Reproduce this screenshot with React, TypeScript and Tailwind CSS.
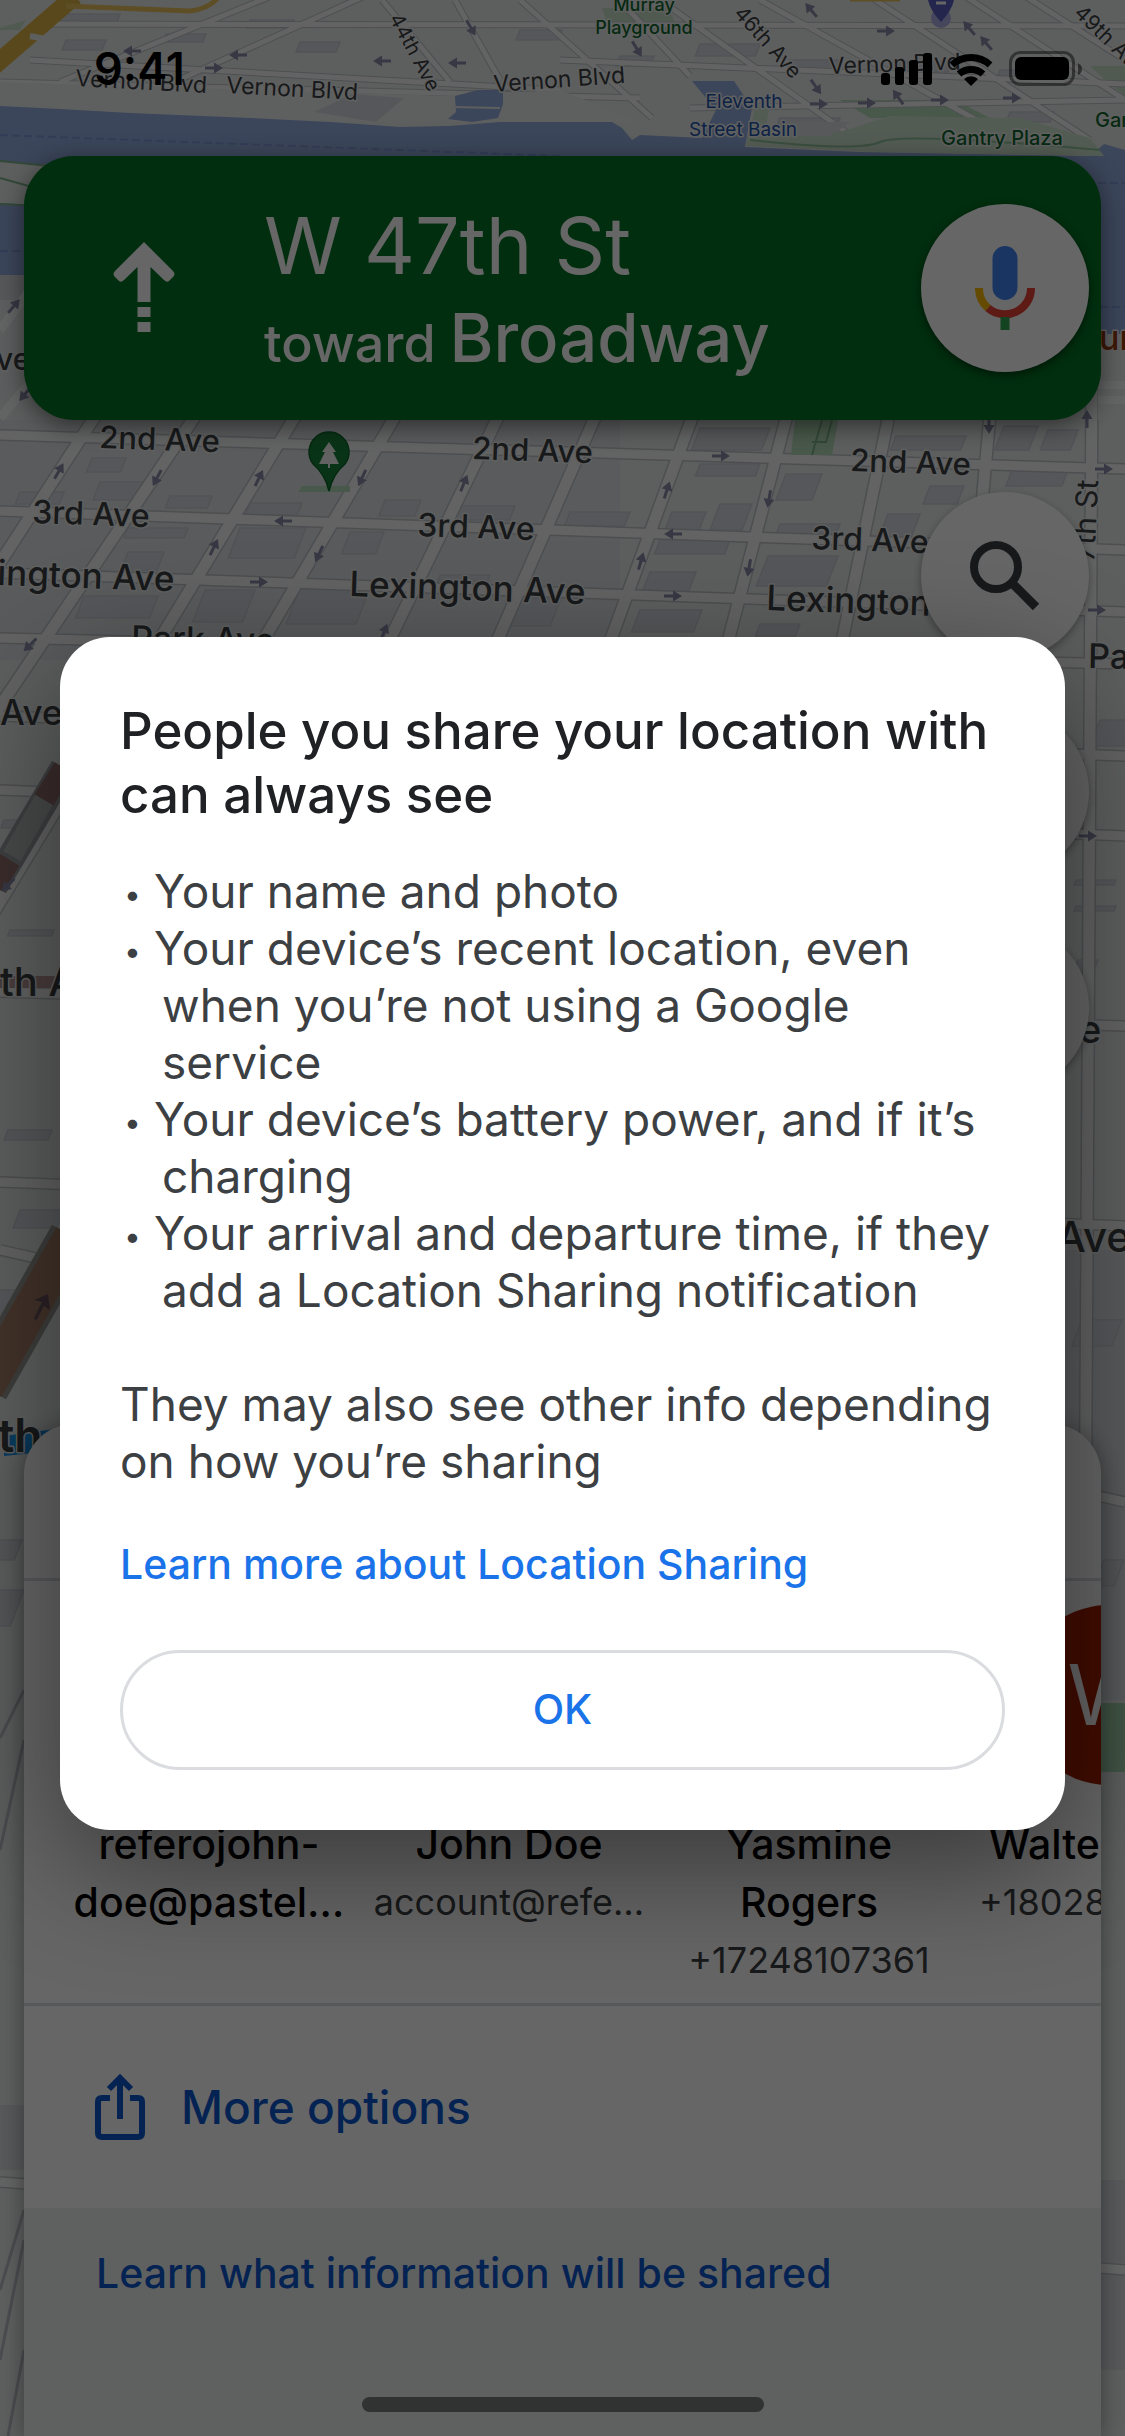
import React from "react";

type Pt = [number, number];

const streets: [Pt, Pt][] = [
  [[96, 415], [-60, 655]],
  [[196, 415], [-420, 1330]],
  [[296, 415], [-260, 1330]],
  [[396, 415], [240, 680]],
  [[499, 415], [370, 680]],
  [[596, 415], [480, 680]],
  [[693, 415], [596, 680]],
  [[787, 415], [718, 680]],
  [[889, 415], [834, 680]],
  [[990, 415], [966, 680]],
  [[1092, 380], [1080, 2436]],
];

const avenues: [Pt, Pt][] = [
  [[0, 435], [1125, 469]],
  [[0, 511], [1125, 550]],
  [[0, 573], [1125, 612]],
  [[0, 638], [1125, 664]],
  [[0, 716], [1125, 756]],
  [[0, 790], [1125, 836]],
  [[0, 992], [1125, 1026]],
  [[0, 1182], [1125, 1226]],
  [[0, 1250], [1125, 1502]],
  [[0, 2182], [1125, 2270]],
];

const topStreets: [Pt, Pt][] = [
  [[30, 60], [560, 90]],
  [[40, 24], [1125, 26]],
  [[60, 82], [360, -40]],
  [[170, 84], [400, -20]],
  [[382, 0], [450, 82]],
  [[455, 0], [500, 80]],
  [[520, 0], [652, 118]],
  [[610, -10], [690, 76]],
  [[660, 0], [860, 142]],
  [[760, 0], [980, 122]],
  [[860, -10], [1090, 140]],
  [[940, -20], [1125, 100]],
  [[1000, -20], [1125, 60]],
  [[560, 60], [1125, 84]],
  [[690, 108], [1125, 100]],
  [[0, 82], [640, 98]],
];

const arrows: [number, number, number][] = [
  [59, 471, -60], [157, 478, 118], [259, 478, -64], [362, 478, 115], [464, 483, -68],
  [214, 547, -64], [319, 554, 115], [283, 521, 180], [259, 582, 0],
  [721, 456, 0], [667, 490, -72], [769, 499, 100], [673, 534, 180], [641, 561, -74],
  [749, 568, 100], [673, 596, 0], [1087, 419, -90], [989, 425, 90], [1104, 469, 0],
  [1097, 610, 0], [384, 632, -68], [30, 645, 135], [8, 885, 135], [1088, 836, 0],
  [132, 51, 180], [238, 55, 180], [214, 68, 0], [382, 61, 180], [457, 63, 180],
  [471, 28, 60], [637, 49, 58], [811, 10, -130], [886, 31, 0], [969, 28, -130],
  [986, 43, -130], [816, 87, 55], [819, 104, 0], [867, 103, 0], [898, 97, -125],
  [940, 100, 0], [1012, 98, 0], [14, 306, -50], [25, 394, 130],
];

const buildings: [number, number, number, number][] = [
  [20, 492, 44, 12], [92, 458, 34, 14], [100, 482, 46, 18], [170, 496, 42, 12],
  [250, 503, 52, 12], [385, 500, 36, 16], [455, 506, 60, 14], [128, 528, 60, 10],
  [128, 552, 36, 18], [240, 528, 66, 30], [350, 532, 34, 22], [84, 596, 74, 22],
  [205, 590, 50, 32], [300, 588, 70, 36], [515, 598, 46, 28], [440, 575, 50, 6],
  [570, 512, 60, 14], [700, 428, 70, 22], [700, 464, 60, 12], [786, 474, 36, 26],
  [780, 524, 60, 10], [672, 512, 34, 18], [720, 504, 32, 26], [650, 572, 46, 28],
  [660, 540, 70, 14], [768, 556, 70, 30], [640, 610, 62, 22], [760, 624, 40, 12],
  [896, 436, 70, 14], [1004, 426, 34, 24], [1048, 430, 30, 20], [930, 486, 34, 18],
  [888, 514, 32, 24], [1012, 470, 56, 16], [60, 14, 60, 12], [66, 40, 40, 10],
  [166, 34, 40, 8], [250, 20, 44, 8], [300, 42, 40, 10], [520, 30, 42, 10],
  [620, 56, 34, 10], [700, 44, 60, 12], [790, 60, 50, 10], [900, 62, 52, 10],
  [1000, 70, 60, 12], [780, 118, 60, 8], [1010, 112, 44, 10], [1100, 720, 40, 26],
  [1076, 880, 40, 5], [1076, 906, 40, 5], [1078, 960, 20, 50], [1082, 1320, 40, 26],
  [4, 820, 50, 8], [10, 930, 44, 6], [8, 1130, 44, 10], [20, 1210, 44, 18],
  [0, 1290, 22, 24], [0, 1540, 22, 20], [0, 1590, 24, 36], [1104, 1560, 20, 26],
];

type Label = { t: string; x: number; y: number; r?: number; s?: number; c?: string; w?: number; a?: "middle" };

const labels: Label[] = [
  { t: "Vernon Blvd", x: 75, y: 86, r: 3, s: 23, w: 400 },
  { t: "Vernon Blvd", x: 226, y: 93, r: 3, s: 23, w: 400 },
  { t: "Vernon Blvd", x: 494, y: 92, r: -4, s: 23, w: 400 },
  { t: "Vernon Blvd", x: 829, y: 74, r: -2, s: 23, w: 400 },
  { t: "44th Ave", x: 389, y: 18, r: 62, s: 20, w: 400 },
  { t: "46th Ave", x: 733, y: 14, r: 48, s: 21, w: 400 },
  { t: "49th Ave", x: 1073, y: 14, r: 44, s: 21, w: 400 },
  { t: "Murray", x: 644, y: 11, s: 18, c: "#11682f", a: "middle" },
  { t: "Playground", x: 644, y: 34, s: 18, c: "#11682f", a: "middle" },
  { t: "Eleventh", x: 744, y: 108, s: 19, c: "#2355ad", w: 400, a: "middle" },
  { t: "Street Basin", x: 743, y: 136, s: 19, c: "#2355ad", w: 400, a: "middle" },
  { t: "Gantry Plaza", x: 1002, y: 145, s: 20, c: "#11682f", a: "middle" },
  { t: "Gantry", x: 1095, y: 127, s: 20, c: "#11682f" },
  { t: "ve", x: -4, y: 370, s: 30 },
  { t: "2nd Ave", x: 99, y: 448, r: 2, s: 31 },
  { t: "2nd Ave", x: 472, y: 459, r: 2, s: 31 },
  { t: "2nd Ave", x: 850, y: 471, r: 2, s: 31 },
  { t: "3rd Ave", x: 32, y: 523, r: 2, s: 32 },
  { t: "3rd Ave", x: 417, y: 536, r: 2, s: 32 },
  { t: "3rd Ave", x: 811, y: 549, r: 2, s: 32 },
  { t: "Lexington Ave", x: -62, y: 583, r: 2, s: 35 },
  { t: "Lexington Ave", x: 349, y: 596, r: 2, s: 35 },
  { t: "Lexington Ave", x: 766, y: 610, r: 2, s: 35 },
  { t: "Park Ave", x: 131, y: 650, r: 1, s: 34 },
  { t: "Park", x: 1088, y: 668, r: 1, s: 34 },
  { t: "7th St", x: 1094, y: 562, r: -87, s: 30, w: 400 },
  { t: "Ave", x: 0, y: 725, s: 35 },
  { t: "th Ave", x: 0, y: 996, s: 40 },
  { t: "e", x: 1079, y: 1043, s: 38 },
  { t: "Ave", x: 1056, y: 1252, s: 42 },
];

const d = ([a, b]: [Pt, Pt]) => `M${a[0]} ${a[1]}L${b[0]} ${b[1]}`;

function CityMap() {
  return (
    <svg
      aria-hidden="true"
      className="absolute inset-0 h-full w-full"
      viewBox="0 0 1125 2436"
      preserveAspectRatio="xMidYMin slice"
      fontFamily="Inter, 'Liberation Sans', sans-serif"
    >
      <rect width="1125" height="2436" fill="#e9ecec" />
      <rect y="420" width="620" height="240" fill="#e2e4e7" />
      <rect y="1250" x="1065" width="60" height="450" fill="#dfe2e6" />
      <path d="M0 2105H24V2170H0ZM1101 2180H1125V2370H1101Z" fill="#dadde2" />

      <g fill="#d7dae0" stroke="#cbced6" strokeWidth="1.5">
        {buildings.map(([x, y, w, h], i) => (
          <path key={i} d={`M${x} ${y}h${w}l${-h / 2.6} ${h}h${-w}z`} />
        ))}
      </g>

      <path d="M840 100H955L990 118H870Z" fill="#b5ddb9" />
      <path d="M602 8H668L680 32H610Z" fill="#c8e2c9" />
      <path d="M1090 66H1125V96L1110 84Z" fill="#c8e2c9" />
      <path d="M0 28L26 20L20 30H0Z" fill="#c8e2c9" />

      <g stroke="#bfc3c9" strokeWidth="10" fill="none">
        {topStreets.map((s, i) => <path key={i} d={d(s)} strokeWidth="7" />)}
        {streets.map((s, i) => <path key={i} d={d(s)} strokeWidth="14" />)}
        {avenues.map((s, i) => <path key={i} d={d(s)} strokeWidth="12" />)}
      </g>
      <g stroke="#f7f8f8" fill="none">
        {topStreets.map((s, i) => <path key={i} d={d(s)} strokeWidth="5" />)}
        {streets.map((s, i) => <path key={i} d={d(s)} strokeWidth="11" />)}
        {avenues.map((s, i) => <path key={i} d={d(s)} strokeWidth="9" />)}
      </g>

      <path d="M0 82L450 96L560 90L640 122L0 122Z" fill="#eceeee" />
      <path d="M352 94L404 98L376 122L314 112Z" fill="#d7dae0" />
      <path
        d="M0 106L60 109L130 113L250 118L330 122L400 127L450 126L500 122L612 122L622 128L632 140L640 135L702 138L716 110L692 81H734L752 108L745 147L860 152L1090 156L1104 144L1125 150V350H0Z"
        fill="#94aee0"
      />
      <path d="M455 96L478 90L503 90L503 104L498 118L472 122L448 119L456 112Z" fill="#94aee0" />
      <path d="M452 107L500 108" stroke="#e9ecec" strokeWidth="2" />
      <path d="M745 146L756 106L770 104L766 126L840 132L890 116L1020 118L1090 138L1104 156L880 152Z" fill="#cfe5d0" />
      <path d="M750 140Q860 152 880 142T1100 150" fill="none" stroke="#90c29b" strokeWidth="2" />
      <path d="M790 122H850L830 136H780Z" fill="#dcdfe3" />
      <path d="M0 161L60 166V206L0 203Z" fill="#e9ecec" />
      <path d="M0 161L60 167M0 204L60 207M0 178L50 192" fill="none" stroke="#7fb58c" strokeWidth="2" />
      <path d="M0 275H60V300H0Z" fill="#d7dae0" />
      <path d="M0 300H60V420H0Z" fill="#e6e9ea" />
      <path d="M0 330L30 290M0 418L60 346" stroke="#f7f8f8" strokeWidth="9" />
      <path d="M0 135L560 156M1098 183H1125M1100 307H1125M0 251H30" stroke="#7f97d6" strokeWidth="2" strokeDasharray="8 4" />
      <path d="M1098 334H1125V420H1098Z" fill="#e9ecec" />
      <path d="M1098 385H1125M1098 400H1125" stroke="#f7f8f8" strokeWidth="8" />

      <path d="M75 -4L-6 66" stroke="#dfb548" strokeWidth="18" />
      <path d="M30 36L50 40" stroke="#e9ecec" strokeWidth="6" />
      <path d="M66 6L190 11Q208 9 218 -2" fill="none" stroke="#e8c260" strokeWidth="5" />
      <path d="M850 0H900" stroke="#e8c260" strokeWidth="3" />

      <path d="M795 420H838L832 455H791Z" fill="#b5ddb9" />
      <path d="M822 420L812 455M812 442H826L832 420" fill="none" stroke="#7fb58c" strokeWidth="2" />
      <path d="M1101 1703H1125V1772H1101Z" fill="#a5d6af" />
      <path d="M302 486H350V492H298Z" fill="#b5ddb9" />

      <path d="M64 768L-6 886" stroke="#9b9fa3" strokeWidth="28" />
      <path d="M64 768L44 800M10 860L-6 886" stroke="#93706f" strokeWidth="22" />
      <path d="M44 800L12 856" stroke="#b3b8b9" strokeWidth="20" />
      <path d="M0 982H60" stroke="#b89a97" strokeWidth="12" />
      <path d="M72 1236L-14 1388" stroke="#9c9c9a" strokeWidth="46" />
      <path d="M72 1236L-14 1388" stroke="#a9806a" strokeWidth="36" />
      <path d="M34 1318l8-16-8-2 14-6 2 16-6-4-8 15z" fill="#6d5560" />
      <path d="M0 1738L24 1690M0 1850L24 1740M0 2290L24 2210M0 2360L24 2240M8 2436L24 2350" fill="none" stroke="#babec5" strokeWidth="3" />

      <path d="M4 1436L62 1428V1450L4 1456Z" fill="#1698f2" />

      <g fill="#8a8cab">
        {arrows.map(([x, y, r], i) => (
          <path key={i} d="M-9-1.5H0V-5.5L9 0L0 5.5V1.5H-9Z" transform={`translate(${x} ${y}) rotate(${r})`} />
        ))}
      </g>

      <circle cx="941" cy="18" r="10" fill="#aeb0e8" />
      <path d="M928 0H954Q952 10 941 22Q930 10 928 0Z" fill="#5a5fc4" />
      <path d="M936 3H946" stroke="#fff" strokeWidth="3" />

      <path d="M329 491Q325 474 313 464A20 20 0 1 1 345 464Q333 474 329 491Z" fill="#178038" stroke="#0c6728" strokeWidth="1.5" />
      <path d="M329 442l7 10h-3l6 12h-9v4h-2v-4h-9l6-12h-3z" fill="#f2f5f2" />

      <g stroke="#eef0f0" strokeWidth="3" paintOrder="stroke" strokeLinejoin="round">
        {labels.map(({ t, x, y, r = 0, s = 30, c = "#3c4043", w = 500, a }, i) => (
          <text key={i} transform={`translate(${x} ${y}) rotate(${r})`} fontSize={s} fontWeight={w} fill={c} textAnchor={a}>
            {t}
          </text>
        ))}
        <text x="-2" y="1452" fontSize="46" fontWeight="600" fill="#3c4043">th</text>
        <text x="1099" y="350" fontSize="34" fontWeight="500" fill="#9a3c10">ur</text>
      </g>
    </svg>
  );
}

function StatusBar() {
  return (
    <div className="flex h-[156px] items-start justify-between pt-9 pr-[42px] pl-[94px]">
      <span className="text-[45px] leading-[66px] font-semibold text-black">9:41</span>
      <div className="flex items-center gap-4 pt-[15px]">
        <svg width="52" height="36" viewBox="0 0 52 36" aria-hidden="true">
          <rect x="0" y="22" width="9" height="12" rx="3" />
          <rect x="14" y="16" width="9" height="18" rx="3" />
          <rect x="28" y="9" width="9" height="25" rx="3" />
          <rect x="42" y="2" width="9" height="32" rx="3" />
        </svg>
        <svg width="44" height="36" viewBox="0 0 44 36" aria-hidden="true">
          <g fill="none" stroke="#000" strokeWidth="7">
            <path d="M3 14A28 28 0 0 1 41 14" />
            <path d="M10 23A18 18 0 0 1 34 23" />
          </g>
          <path d="M22 35L15 28A10 10 0 0 1 29 28Z" />
        </svg>
        <svg width="74" height="36" viewBox="0 0 74 36" aria-hidden="true">
          <rect x="1.500" y="1.500" width="63" height="32" rx="10" fill="none" stroke="#000" strokeOpacity="0.45" strokeWidth="3" />
          <rect x="6" y="6" width="54" height="23" rx="6" />
          <path d="M69 12Q73 14 73 18T69 24Z" fillOpacity="0.5" />
        </svg>
      </div>
    </div>
  );
}

function DirectionCard() {
  return (
    <header className="mx-6 flex h-[264px] items-center rounded-[50px] bg-[#027323] pr-3 text-white shadow-[0_6px_24px_rgba(0,0,0,0.5)]">
      <div className="flex w-60 shrink-0 justify-center">
        <svg width="62" height="92" viewBox="0 0 62 92" fill="#fff" aria-label="Continue straight">
          <path d="M31 0L60 29Q63 32 60 35L56 39Q54 41 51 38L37.500 25V60H24.500V25L11 38Q8 41 6 39L2 35Q-1 32 2 29Z" />
          <path d="M24.500 65H37.500V75H24.500ZM24.500 80H37.500V90H24.500Z" />
        </svg>
      </div>
      <div className="flex-1 pt-2 whitespace-nowrap">
        <h1 className="text-[79px] leading-[98px]">W 47th St</h1>
        <p className="text-[52px] leading-[88px] font-medium">
          toward <span className="text-[67px]">Broadway</span>
        </p>
      </div>
      <button
        type="button"
        aria-label="Voice search"
        className="flex size-[168px] shrink-0 items-center justify-center rounded-full bg-white shadow-[0_3px_9px_rgba(0,0,0,0.5)]"
      >
        <svg width="60" height="84" viewBox="0 0 60 84" fill="none">
          <rect x="17.500" y="0" width="25" height="54" rx="12.500" fill="#4285f4" />
          <path d="M4 42A26 26 0 0 0 13 62" stroke="#fbbc04" strokeWidth="8" />
          <path d="M13 62A26 26 0 0 0 56 42" stroke="#ea4335" strokeWidth="8" />
          <path d="M30 71V84" stroke="#34a853" strokeWidth="9" />
        </svg>
      </button>
    </header>
  );
}

const fab =
  "flex size-[168px] items-center justify-center rounded-full bg-white shadow-[0_3px_9px_rgba(0,0,0,0.35)]";

function MapButtons() {
  return (
    <div className="flex flex-col items-end gap-12 pt-[72px] pr-9">
      <button type="button" aria-label="Search along route" className={fab}>
        <svg width="72" height="72" viewBox="0 0 72 72" fill="none" stroke="#3c4043">
          <circle cx="27" cy="27" r="22" strokeWidth="8" />
          <path d="M43 43L67 67" strokeWidth="9" />
        </svg>
      </button>
      <button type="button" aria-label="Sound" className={fab} />
      <button type="button" aria-label="Report" className={fab} />
    </div>
  );
}

const people = [
  { name: "referojohn-doe@pastel…", contact: "", avatar: "bg-[#5f6368]" },
  { name: "John Doe", contact: "account@refe…", avatar: "bg-[#1a73e8]" },
  { name: "Yasmine Rogers", contact: "+17248107361", avatar: "bg-[#188038]" },
];

function ShareSheet() {
  return (
    <section
      aria-label="Share trip progress"
      className="mx-6 mt-auto overflow-hidden rounded-t-[50px] bg-white shadow-[0_3px_24px_rgba(0,0,0,0.4)]"
    >
      <div className="h-[154px]" />
      <ul className="flex h-[428px] border-y-[3px] border-[#dadce0] pt-6 pl-[35px] text-center">
        {people.map((p) => (
          <li key={p.name} className="flex w-[300px] shrink-0 flex-col items-center">
            <span className={`size-[180px] shrink-0 rounded-full ${p.avatar}`} />
            <span className="mt-[30px] w-[280px] px-1 text-[41px] leading-[58px] font-medium break-words text-black">
              {p.name}
            </span>
            <span className="text-[36px] leading-[58px] text-[#3c4043]">{p.contact}</span>
          </li>
        ))}
        <li className="flex w-[300px] shrink-0 flex-col items-center">
          <span className="flex size-[180px] shrink-0 items-center justify-center rounded-full bg-[#a61f00] text-[84px] text-white">
            W
          </span>
          <span className="mt-[30px] w-[240px] text-left text-[41px] leading-[58px] font-medium text-black">Walter</span>
          <span className="w-[260px] text-left text-[36px] leading-[58px] text-[#3c4043]">+18028</span>
        </li>
      </ul>
      <button type="button" className="flex h-[202px] w-full items-center gap-9 pl-[71px] text-[46px] font-medium text-[#0b57d0]">
        <svg width="50" height="66" viewBox="0 0 50 66" fill="none" stroke="currentColor" strokeWidth="6">
          <path d="M15 24H7Q3 24 3 28V59Q3 63 7 63H43Q47 63 47 59V28Q47 24 43 24H35" />
          <path d="M25 45V6M14 15L25 4L36 15" />
        </svg>
        More options
      </button>
      <div className="h-[228px] bg-[#eef2f0] pt-9 pl-[72px]">
        <a href="#shared" className="text-[41px] leading-[58px] font-medium text-[#0b57d0]">
          Learn what information will be shared
        </a>
      </div>
    </section>
  );
}

const visibleInfo = [
  "Your name and photo",
  "Your device’s recent location, even when you’re not using a Google service",
  "Your device’s battery power, and if it’s charging",
  "Your arrival and departure time, if they add a Location Sharing notification",
];

function SharingDialog() {
  return (
    <div className="absolute inset-0 flex items-center bg-black/60 px-[60px] pt-[30px]">
      <div
        role="dialog"
        aria-modal="true"
        aria-labelledby="sharing-title"
        className="w-full rounded-[50px] bg-white p-[60px] pt-[62px] text-[#3c4043] shadow-[0_36px_120px_rgba(0,0,0,0.45)]"
      >
        <h2 id="sharing-title" className="text-[51px] leading-[64px] font-medium text-[#202124]">
          People you share your location with can always see
        </h2>
        <ul className="mt-9 text-[46px] leading-[57px]">
          {visibleInfo.map((item) => (
            <li key={item} className="pl-[42px] -indent-[38px]">
              <span className="inline-block w-[30px] align-[3px] text-[30px] leading-none indent-0">•</span>
              {item}
            </li>
          ))}
        </ul>
        <p className="mt-[57px] text-[46px] leading-[57px]">
          They may also see other info depending on how you’re sharing
        </p>
        <a href="#learn" className="mt-[46px] block text-[41px] leading-[57px] font-medium text-[#1a73e8]">
          Learn more about Location Sharing
        </a>
        <button
          type="button"
          className="mt-[57px] h-[120px] w-full rounded-full border-[3px] border-[#dadce0] text-[41px] font-medium text-[#1a73e8]"
        >
          OK
        </button>
      </div>
    </div>
  );
}

export default function App() {
  return (
    <main className="relative isolate flex min-h-screen flex-col overflow-hidden font-[Inter,'Liberation_Sans',sans-serif]">
      <CityMap />
      <div className="relative flex flex-1 flex-col">
        <StatusBar />
        <DirectionCard />
        <MapButtons />
        <ShareSheet />
      </div>
      <SharingDialog />
      <div className="absolute bottom-6 left-1/2 h-[15px] w-[402px] -translate-x-1/2 rounded-full bg-[#313232]" />
    </main>
  );
}
